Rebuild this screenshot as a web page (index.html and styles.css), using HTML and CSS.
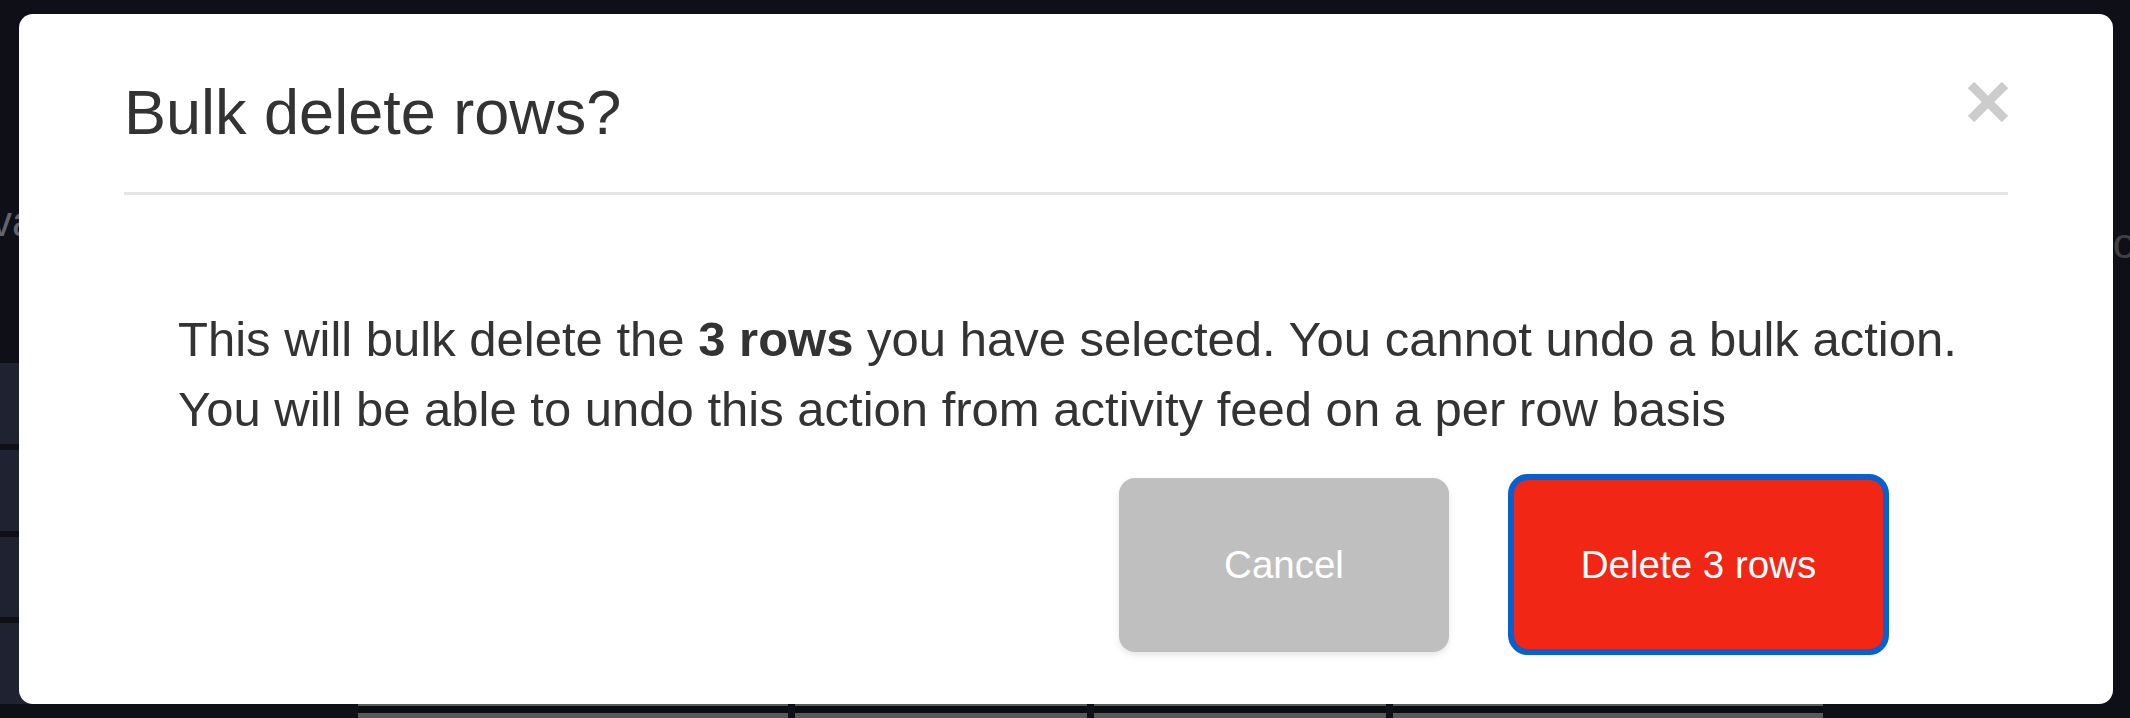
FILE: index.html
```html
<!DOCTYPE html>
<html lang="en">
<head>
<meta charset="utf-8">
<title>Bulk delete rows?</title>
<link rel="stylesheet" href="styles.css">
</head>
<body>
<div class="page">
  <div class="page-top">
    <span class="bg-label bg-left">va</span>
    <span class="bg-label bg-right">o</span>
  </div>
  <div class="side-rows">
    <div class="side-row"></div>
    <div class="side-row"></div>
    <div class="side-row"></div>
    <div class="side-row"></div>
  </div>
  <div class="bottom-strip">
    <div class="bottom-cell cell-a"></div>
    <div class="bottom-cell cell-b"></div>
    <div class="bottom-cell cell-b"></div>
    <div class="bottom-cell cell-a"></div>
  </div>
</div>

<div class="modal" role="dialog" aria-labelledby="modal-title">
  <div class="modal-header">
    <h1 class="modal-title" id="modal-title">Bulk delete rows?</h1>
    <button class="close" type="button" aria-label="Close">
      <svg width="40" height="40" viewBox="0 0 40 40" aria-hidden="true">
        <line x1="3" y1="3" x2="37" y2="37" stroke="#cccccc" stroke-width="9" stroke-linecap="butt"/>
        <line x1="37" y1="3" x2="3" y2="37" stroke="#cccccc" stroke-width="9" stroke-linecap="butt"/>
      </svg>
    </button>
  </div>
  <div class="modal-body">
    <p>This will bulk delete the <strong>3 rows</strong> you have selected. You cannot undo a bulk action.<br>You will be able to undo this action from activity feed on a per row basis</p>
  </div>
  <div class="modal-footer">
    <button class="btn btn-cancel" type="button">Cancel</button>
    <button class="btn btn-delete" type="button">Delete 3 rows</button>
  </div>
</div>
</body>
</html>
```

FILE: styles.css
```css
html, body {
  margin: 0;
  padding: 0;
}

body {
  width: 2130px;
  height: 718px;
  overflow: hidden;
  position: relative;
  background: #0e0f17;
  font-family: "Liberation Sans", Arial, Helvetica, sans-serif;
}

/* ---------- dimmed page behind the dialog ---------- */
.page {
  height: 718px;
  display: flex;
  flex-direction: column;
  background: #0e0f17;
  overflow: hidden;
}

.page-top {
  height: 363px;
  box-sizing: border-box;
  padding-top: 198px;
  display: flex;
  justify-content: space-between;
  align-items: flex-start;
}

.bg-label {
  font-size: 42px;
  line-height: 48px;
  white-space: nowrap;
}

.bg-left {
  color: #62656e;
  margin-left: -9px;
}

.bg-right {
  color: #3e4048;
  margin-right: -6px;
  margin-top: 22px;
}

.side-rows {
  width: 352px;
  height: 341px;
  display: flex;
  flex-direction: column;
  gap: 6px;
}

.side-row {
  flex: 1;
  background: linear-gradient(90deg, #1f2230 0%, #272a37 100%);
}

.bottom-strip {
  height: 14px;
  box-sizing: border-box;
  padding-left: 358px;
  display: flex;
  gap: 7px;
}

.bottom-cell {
  box-sizing: border-box;
  height: 14px;
  border-top: 2px solid #5b5b5d;
  border-bottom: 5px solid #59595b;
  background: #0b0c11;
}

.cell-a { width: 430px; }
.cell-b { width: 292px; }

/* ---------- dialog ---------- */
.modal {
  position: absolute;
  top: 14px;
  left: 19px;
  width: 2094px;
  height: 690px;
  background: #ffffff;
  border-radius: 14px;
  color: #333333;
}

.modal-header {
  margin: 0 105px;
  padding: 62px 0 44px;
  border-bottom: 3px solid #e5e5e5;
  display: flex;
  justify-content: space-between;
  align-items: flex-start;
}

.modal-title {
  margin: 0;
  font-size: 63px;
  line-height: 72px;
  font-weight: 400;
  color: #333333;
}

.close {
  width: 40px;
  height: 40px;
  margin-top: 6px;
  padding: 0;
  border: none;
  background: none;
  display: block;
}

.close svg {
  display: block;
}

.modal-body {
  padding: 109px 0 0 159px;
  font-size: 49px;
  line-height: 70px;
}

.modal-body p {
  margin: 0;
}

.modal-body strong {
  font-weight: 700;
}

.modal-footer {
  margin-top: 30px;
  padding-right: 224px;
  display: flex;
  justify-content: flex-end;
  align-items: center;
  gap: 59px;
}

.btn {
  font-family: "Liberation Sans", Arial, Helvetica, sans-serif;
  font-size: 38.5px;
  color: #ffffff;
  padding: 0;
  box-sizing: border-box;
  display: flex;
  align-items: center;
  justify-content: center;
}

.btn-cancel {
  width: 330px;
  height: 174px;
  background: #bfbfbf;
  border: none;
  border-radius: 16px;
  box-shadow: 0 3px 6px rgba(0, 0, 0, 0.10);
}

.btn-delete {
  width: 381px;
  height: 181px;
  background: #f22614;
  border: 6px solid #0561d2;
  border-radius: 20px;
}
```
